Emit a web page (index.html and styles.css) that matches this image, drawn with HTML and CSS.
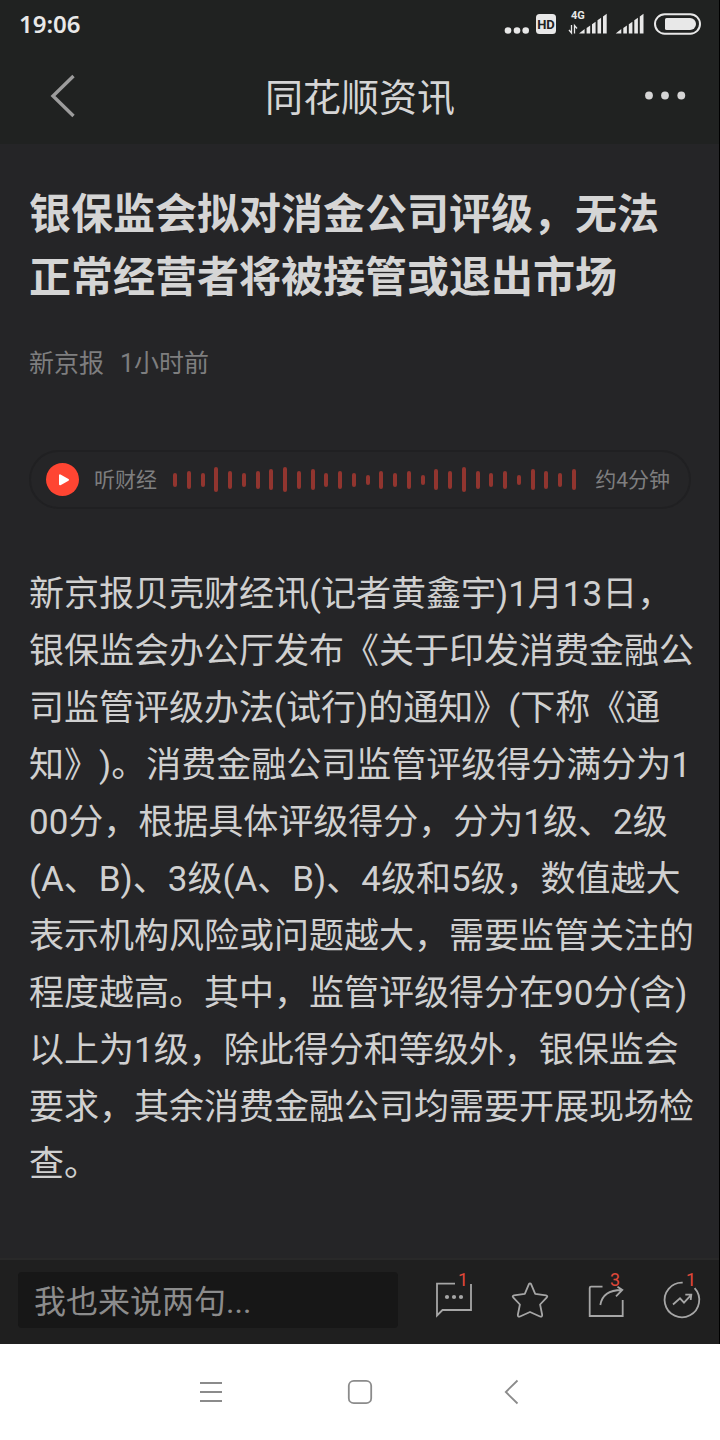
FILE: index.html
```html
<!DOCTYPE html>
<html lang="zh-CN">
<head>
<meta charset="utf-8">
<meta name="viewport" content="width=device-width, initial-scale=1">
<title>同花顺资讯</title>
<link rel="stylesheet" href="styles.css">
</head>
<body>
<div class="app">
  <div class="status">
    <time class="clock">19:06</time>
    <svg class="status-icons" width="230" height="48" viewBox="0 0 230 48" aria-hidden="true">
      <g fill="#e8e8e8">
        <circle cx="18" cy="30.5" r="3.3"/><circle cx="27" cy="30.5" r="3.3"/><circle cx="35.7" cy="30.5" r="3.3"/>
        <rect x="46" y="14" width="20" height="20" rx="3.5"/>
        <text class="tiny" x="81" y="19">4G</text>
        <path d="M89 33.5L94.6 29v4.5zM96.600 28l3.600-2.500v8h-3.600zM102 24.200l3.600-2.500v11.800h-3.600zM107.500 20.300l3.600-2.500v15.700h-3.600zM113 16.500l3.700-2.700v19.700h-3.700z"/>
        <path d="M125.700 33.500L131.300 29v4.500zM133.300 28l3.600-2.500v8h-3.600zM138.800 24.200l3.600-2.500v11.800h-3.600zM144.300 20.300l3.600-2.500v15.700h-3.600zM149.800 16.500l3.700-2.700v19.700h-3.700z"/>
        <path d="M176.500 18H200a6 6 0 0 1 0 12H176.500a1.500 1.500 0 0 1-1.500-1.500v-9a1.500 1.500 0 0 1 1.500-1.500z"/>
      </g>
      <text class="hd" x="56" y="29" text-anchor="middle">HD</text>
      <path d="M81.500 25v8l-2.500-3M84.500 33.500v-8l2.500 3" fill="none" stroke="#e8e8e8" stroke-width="1.300"/>
      <rect x="165" y="14.300" width="45" height="19.400" rx="9.700" fill="none" stroke="#e8e8e8" stroke-width="2"/>
    </svg>
  </div>

  <header class="topbar">
    <button class="top-btn back" type="button" aria-label="返回">
      <svg width="48" height="48" viewBox="0 0 48 48"><path d="M33.500 4L13 24l20.500 20" fill="none" stroke="#9c9c9c" stroke-width="3.400"/></svg>
    </button>
    <div class="top-title">同花顺资讯</div>
    <button class="top-btn more" type="button" aria-label="更多">
      <svg width="48" height="48" viewBox="0 0 48 48" fill="#d5d5d5"><circle cx="7" cy="23.500" r="3.900"/><circle cx="23" cy="23.500" r="3.900"/><circle cx="39.300" cy="23.500" r="3.900"/></svg>
    </button>
  </header>

  <main class="article">
    <h1 class="headline">银保监会拟对消金公司评级，无法<br>正常经营者将被接管或退出市场</h1>
    <div class="meta"><span>新京报</span><span>1小时前</span></div>

    <div class="player">
      <button class="play" type="button" aria-label="播放">
        <svg width="33" height="33" viewBox="0 0 33 33"><circle cx="16.500" cy="16.500" r="16.500" fill="#ff4532"/><path d="M14 12.300v9l8-4.500z" fill="#fff" stroke="#fff" stroke-width="2" stroke-linejoin="round"/></svg>
      </button>
      <span class="player-label">听财经</span>
      <div class="wave" aria-hidden="true">
        <i class="b2"></i><i class="b3"></i><i class="b2"></i><i class="b5"></i><i class="b3"></i><i class="b2"></i><i class="b3"></i><i class="b4"></i><i class="b5"></i><i class="b3"></i><i class="b4"></i><i class="b2"></i><i class="b3"></i><i class="b2"></i><i class="b1"></i><i class="b3"></i><i class="b2"></i><i class="b3"></i><i class="b1"></i><i class="b4"></i><i class="b3"></i><i class="b5"></i><i class="b3"></i><i class="b2"></i><i class="b3"></i><i class="b1"></i><i class="b4"></i><i class="b3"></i><i class="b2"></i><i class="b4"></i>
      </div>
      <span class="player-label">约4分钟</span>
    </div>

    <p class="content">新京报贝壳财经讯(记者黄鑫宇)1月13日，<br>银保监会办公厅发布《关于印发消费金融公<br>司监管评级办法(试行)的通知》(下称《通<br>知》)。消费金融公司监管评级得分满分为1<br>00分，根据具体评级得分，分为1级、2级<br>(A、B)、3级(A、B)、4级和5级，数值越大<br>表示机构风险或问题越大，需要监管关注的<br>程度越高。其中，监管评级得分在90分(含)<br>以上为1级，除此得分和等级外，银保监会<br>要求，其余消费金融公司均需要开展现场检<br>查。</p>
  </main>

  <footer class="actions">
    <input class="comment" type="text" placeholder="我也来说两句..." aria-label="我也来说两句">
    <button class="action" type="button" aria-label="评论">
      <svg width="76" height="84" viewBox="0 0 76 84"><path d="M39 23.700H21V55.500l5.500-5.500H55V24" fill="none" stroke="#a6a6a6" stroke-width="1.800"/><g fill="#a6a6a6"><circle cx="31" cy="37" r="2.100"/><circle cx="38" cy="37" r="2.100"/><circle cx="45" cy="37" r="2.100"/></g></svg>
      <span class="badge">1</span>
    </button>
    <button class="action" type="button" aria-label="收藏">
      <svg width="76" height="84" viewBox="0 0 76 84"><path d="M36.800 24.300Q38 22.300 39.200 24.300L43.200 33.800L54 35.300Q56.300 36 54.600 37.600L48.100 44.500L50.200 55Q50.200 57.200 48 56.500L38 52L28 56.500Q25.800 57.200 25.800 55L27.900 44.500L21.400 37.600Q19.700 36 22 35.300L32.800 33.800Z" fill="none" stroke="#a6a6a6" stroke-width="1.800" stroke-linejoin="round"/></svg>
    </button>
    <button class="action" type="button" aria-label="分享">
      <svg width="76" height="84" viewBox="0 0 76 84" fill="none" stroke="#a6a6a6" stroke-width="1.800"><path d="M34.500 26.700H23Q21.700 26.700 21.700 28V56H54.700V40"/><path d="M32.300 45C34 35 41 30 53.500 30M49.500 26.800L54.300 30L48 36.300"/></svg>
      <span class="badge">3</span>
    </button>
    <button class="action" type="button" aria-label="热度">
      <svg width="76" height="84" viewBox="0 0 76 84" fill="none" stroke="#a6a6a6" stroke-width="1.800"><path d="M50.600 28.200A17.300 17.300 0 1 1 38.700 22.700"/><path d="M29 44.500L36 38.300L40 42.700L47 35.200M41.300 34.700H47.300L46.700 40"/></svg>
      <span class="badge">1</span>
    </button>
  </footer>
</div>

<nav class="sysnav" aria-label="系统导航">
  <button class="nav-btn" type="button" aria-label="菜单"><svg width="48" height="48" viewBox="0 0 48 48"><path d="M14 15h22M14 24h22M14 33h22" stroke="#8b8b8b" stroke-width="1.800"/></svg></button>
  <button class="nav-btn" type="button" aria-label="主页"><svg width="48" height="48" viewBox="0 0 48 48"><rect x="12.800" y="12.800" width="22.400" height="22.400" rx="5" fill="none" stroke="#8b8b8b" stroke-width="1.800"/></svg></button>
  <button class="nav-btn" type="button" aria-label="后退"><svg width="48" height="48" viewBox="0 0 48 48"><path d="M31.500 12.500L19.800 24l11.700 11.500" fill="none" stroke="#8b8b8b" stroke-width="1.800"/></svg></button>
</nav>
</body>
</html>
```
FILE: styles.css
```css
* {
  box-sizing: border-box;
}

body {
  margin: 0;
  min-height: 100vh;
  display: flex;
  flex-direction: column;
  background: #fff;
  font-family: Roboto, "Noto Sans CJK SC", sans-serif;
  text-spacing-trim: space-all;
}

button {
  margin: 0;
  padding: 0;
  border: 0;
  background: none;
  font: inherit;
}

svg {
  display: block;
}

.app {
  position: relative;
  flex: 1;
  display: flex;
  flex-direction: column;
  background: #252527;
}

/* thin dark edge over the right side of every section */
.app::after {
  content: "";
  position: absolute;
  top: 0;
  right: 0;
  bottom: 0;
  width: 1px;
  background: #000;
}

.status {
  height: 48px;
  display: flex;
  align-items: center;
  justify-content: space-between;
  padding-left: 19px;
  background: #202221;
}

.clock {
  font-family: "Noto Sans", sans-serif;
  font-size: 24px;
  font-weight: 600;
  line-height: 48px;
  color: #e8e8e8;
}

.tiny {
  font-size: 11px;
  font-weight: 700;
}

.hd {
  font-size: 13px;
  font-weight: 700;
  fill: #202221;
}

.topbar {
  height: 96px;
  display: grid;
  grid-template-columns: 1fr auto 1fr;
  align-items: center;
  padding: 0 30px 0 30px;
  background: #202221;
}

.back {
  justify-self: start;
  padding-left: 10px;
}

.more {
  justify-self: end;
}

.top-title {
  padding-top: 3px;
  font-size: 38px;
  line-height: 56px;
  color: #d5d5d5;
}

.article {
  flex: 1;
  padding: 39px 29px 64px;
}

.headline {
  margin: 0;
  font-size: 42px;
  font-weight: 700;
  line-height: 63px;
  color: #d5d5d5;
  white-space: nowrap;
}

.meta {
  display: flex;
  gap: 16px;
  margin-top: 37px;
  font-size: 25px;
  line-height: 36px;
  color: #7e7e7f;
}

.player {
  display: flex;
  align-items: center;
  gap: 15px;
  height: 59px;
  margin-top: 68px;
  padding: 0 19px 0 15px;
  border: 2px solid #202022;
  border-radius: 30px;
}

.player-label {
  font-size: 21px;
  line-height: 32px;
  color: #7e7e7f;
}

.wave {
  flex: 1;
  display: flex;
  align-items: center;
  justify-content: space-between;
  margin: 0 4px 0 1px;
}

.wave i {
  width: 4px;
  border-radius: 2px;
  background: #91352f;
}

.wave .b1 { height: 10px; }
.wave .b2 { height: 14px; }
.wave .b3 { height: 18px; }
.wave .b4 { height: 21px; }
.wave .b5 { height: 25px; }

.content {
  margin: 57px 0 0;
  font-size: 35px;
  line-height: 57px;
  color: #d0d0d0;
  white-space: nowrap;
}

.actions {
  display: flex;
  align-items: center;
  height: 86px;
  padding-left: 18px;
  border-top: 2px solid #292929;
  background: #1f1f1f;
}

.comment {
  flex: 1;
  min-width: 0;
  height: 56px;
  margin: 0 18px 4px 0;
  padding: 3px 16px 0;
  border: 0;
  border-radius: 4px;
  background: #171717;
  font-family: inherit;
  font-size: 32px;
  color: #d0d0d0;
}

.comment::placeholder {
  color: #8c8c8c;
  opacity: 1;
}

.action {
  position: relative;
  width: 76px;
  height: 84px;
}

.badge {
  position: absolute;
  top: 10px;
  left: 42px;
  font-size: 18px;
  line-height: 20px;
  color: #e0483a;
}

.sysnav {
  display: flex;
  align-items: center;
  justify-content: center;
  gap: 102px;
  height: 96px;
  background: #fff;
}
```
